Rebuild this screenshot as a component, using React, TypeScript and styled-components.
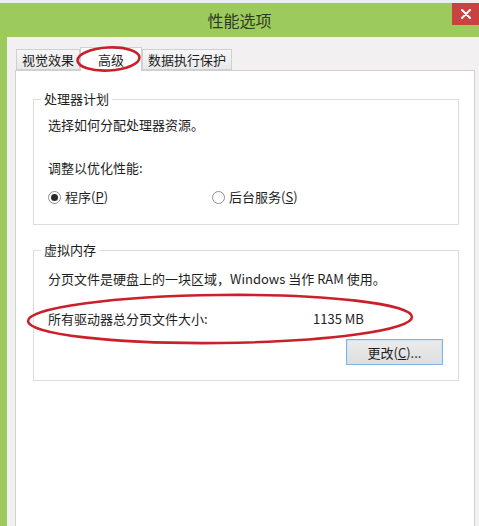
import React from 'react';
import styled, { createGlobalStyle } from 'styled-components';

const GlobalStyle = createGlobalStyle`
  html, body {
    margin: 0;
    padding: 0;
    background: #ffffff;
  }
  body {
    font-family: "Noto Sans CJK SC", "Noto Sans", sans-serif;
    font-size: 13px;
    color: #222;
  }
`

const Window = styled.div`
  position: relative;
  width: 479px;
  height: 526px;
  display: flex;
  flex-direction: column;
  overflow: hidden;
  background: #f1f1f1;
`

const TopStrip = styled.div`
  height: 3px;
  background: #eceef0;
`

const TitleBar = styled.div`
  height: 34px;
  background: #9dca5c;
  display: grid;
  grid-template-columns: 1fr auto 1fr;
  align-items: start;
`

const Title = styled.div`
  grid-column: 2;
  line-height: 34px;
  font-size: 16px;
  color: #2e3a26;
`

const CloseButton = styled.div`
  grid-column: 3;
  justify-self: end;
  width: 27px;
  height: 22px;
  background: #c8433f;
  display: flex;
  align-items: center;
  justify-content: center;
`

const Body = styled.div`
  flex: 1;
  display: flex;
  flex-direction: column;
  border-left: 7px solid #9dca5c;
  background: #f2f0f1;
  padding: 10px 4px 0 8px;
`

const TabStrip = styled.div`
  display: flex;
  align-items: flex-end;
  height: 23px;
  padding-left: 1px;
`

const Tab = styled.div<{ $width: number; $active?: boolean }>`
  position: relative;
  box-sizing: border-box;
  width: ${p => p.$width}px;
  height: ${p => (p.$active ? 24 : 21)}px;
  margin-bottom: ${p => (p.$active ? -1 : 0)}px;
  z-index: ${p => (p.$active ? 1 : 0)};
  border: 1px solid #cfd0d2;
  border-bottom: ${p => (p.$active ? 'none' : '1px solid #cfd0d2')};
  background: ${p => (p.$active ? '#ffffff' : 'linear-gradient(#f6f6f6, #e9e9e9)')};
  display: flex;
  align-items: center;
  justify-content: center;
  font-size: 13px;
  color: #1e1e1e;
`

const Panel = styled.div`
  flex: 1;
  background: #ffffff;
  border: 1px solid #cfd0d2;
  border-bottom: none;
  padding: 19px 15px 0 17px;
  display: flex;
  flex-direction: column;
`

const Group = styled.fieldset<{ $gap?: number; $bottom: number }>`
  margin: ${p => p.$gap ?? 0}px 0 0 0;
  min-width: 0;
  border: 1px solid #dcdcdc;
  padding: 0 14px ${p => p.$bottom}px 14px;
`

const Legend = styled.legend`
  padding: 0 3px;
  margin-left: -7px;
  font-size: 13px;
  line-height: 18px;
  color: #1e1e1e;
`

const Line = styled.div<{ $top: number }>`
  margin-top: ${p => p.$top}px;
  line-height: 18px;
  font-size: 13px;
  color: #1e1e1e;
  white-space: nowrap;
`

const RadioRow = styled.div`
  margin-top: 11px;
  display: grid;
  grid-template-columns: 164px auto;
  line-height: 18px;
`

const RadioOption = styled.label`
  display: flex;
  align-items: center;
  gap: 4px;
  color: #1e1e1e;
`

const RadioDot = styled.span<{ $checked?: boolean }>`
  box-sizing: border-box;
  width: 13px;
  height: 13px;
  border-radius: 50%;
  border: 1px solid #8f8f8f;
  background: #ffffff;
  display: flex;
  align-items: center;
  justify-content: center;
  &::after {
    content: '';
    display: ${p => (p.$checked ? 'block' : 'none')};
    width: 7px;
    height: 7px;
    border-radius: 50%;
    background: #2a2a2a;
  }
`

const Key = styled.span`
  text-decoration: underline;
`

const SizeRow = styled.div`
  margin-top: 22px;
  display: grid;
  grid-template-columns: 265px auto;
  line-height: 18px;
  color: #1e1e1e;
`

const ButtonRow = styled.div`
  margin-top: 11px;
  display: flex;
  justify-content: flex-end;
  padding-right: 1px;
`

const Button = styled.div`
  box-sizing: border-box;
  width: 97px;
  height: 26px;
  border: 1px solid #7fb3e6;
  background: linear-gradient(#ececec, #dedede);
  box-shadow: inset 0 0 0 1px #cfe3f7;
  display: flex;
  align-items: center;
  justify-content: center;
  font-size: 13px;
  color: #1e1e1e;
`

const Annotation = styled.svg`
  position: absolute;
  top: 0;
  left: 0;
  z-index: 5;
  pointer-events: none;
`

export default function App() {
  return (
    <>
      <GlobalStyle />
      <Window>
        <TopStrip />
        <TitleBar>
          <Title>性能选项</Title>
          <CloseButton>
            <svg width="10" height="10" viewBox="0 0 10 10">
              <path d="M1 1 L9 9 M9 1 L1 9" stroke="#fff" strokeWidth="2" strokeLinecap="round" />
            </svg>
          </CloseButton>
        </TitleBar>
        <Body>
          <TabStrip>
            <Tab $width={64}>视觉效果</Tab>
            <Tab $width={62} $active>高级</Tab>
            <Tab $width={90}>数据执行保护</Tab>
          </TabStrip>
          <Panel>
            <Group $bottom={18}>
              <Legend>处理器计划</Legend>
              <Line $top={8}>选择如何分配处理器资源。</Line>
              <Line $top={25}>调整以优化性能:</Line>
              <RadioRow>
                <RadioOption>
                  <RadioDot $checked />
                  <span>程序(<Key>P</Key>)</span>
                </RadioOption>
                <RadioOption>
                  <RadioDot />
                  <span>后台服务(<Key>S</Key>)</span>
                </RadioOption>
              </RadioRow>
            </Group>
            <Group $gap={16} $bottom={15}>
              <Legend>虚拟内存</Legend>
              <Line $top={11}>分页文件是硬盘上的一块区域，Windows 当作 RAM 使用。</Line>
              <SizeRow>
                <span>所有驱动器总分页文件大小:</span>
                <span>1135 MB</span>
              </SizeRow>
              <ButtonRow>
                <Button>更改(<Key>C</Key>)...</Button>
              </ButtonRow>
            </Group>
          </Panel>
        </Body>
        <Annotation width="479" height="526" viewBox="0 0 479 526">
          <ellipse cx="108.5" cy="59" rx="31" ry="11.5" fill="none" stroke="#c9202a" strokeWidth="2.6" transform="rotate(-3 108.5 59)" />
          <ellipse cx="220" cy="319" rx="192" ry="24" fill="none" stroke="#c9202a" strokeWidth="2.6" transform="rotate(-0.6 220 319)" />
        </Annotation>
      </Window>
    </>
  );
}
